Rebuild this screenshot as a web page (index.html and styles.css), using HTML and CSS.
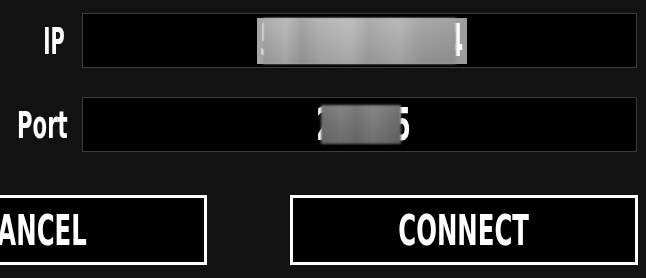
FILE: index.html
```html
<!DOCTYPE html>
<html lang="en">
<head>
  <meta charset="UTF-8" />
  <meta name="viewport" content="width=device-width, initial-scale=1" />
  <title>Connect</title>
  <link rel="stylesheet" href="styles.css">
</head>
<body>
<div class="dialog">
  <div class="field">
    <label class="field-label label-short"><span>IP</span></label>
    <div class="field-box">
      <span class="value value-ip">
        <span class="digit">5</span><span class="mask mask-ip"></span><span class="digit digit-end">4</span>
      </span>
    </div>
  </div>

  <div class="field">
    <label class="field-label"><span>Port</span></label>
    <div class="field-box">
      <span class="value value-port">
        <span class="digit">2</span><span class="mask mask-port"></span><span class="digit digit-end">5</span>
      </span>
    </div>
  </div>

  <div class="actions">
    <button class="btn"><span>CANCEL</span></button>
    <button class="btn"><span>CONNECT</span></button>
  </div>
</div>
</body>
</html>
```

FILE: styles.css
```css
html, body {
  margin: 0;
  padding: 0;
  background: #121212;
  color: #fff;
  overflow: hidden;
}
.dialog {
  padding-top: 13px;
  width: 638px;
  font-family: "DejaVu Sans Condensed", "Liberation Sans Narrow", sans-serif;
  font-weight: bold;
}
.field {
  display: grid;
  grid-template-columns: 82px 555px;
  height: 55px;
  margin-bottom: 29px;
}
.field-label {
  align-self: center;
  display: flex;
  justify-content: flex-end;
  padding-right: 14px;
  font-size: 38px;
  line-height: 1;
}
.field-label span {
  flex-shrink: 0;
  display: inline-block;
  transform: scaleX(0.62);
  transform-origin: right center;
}
.label-short {
  padding-right: 17px;
}
.label-short span {
  transform: scaleX(0.57);
}
.field-box {
  background: #000;
  border: 1.5px solid #3d3d3d;
  display: flex;
  align-items: center;
  justify-content: center;
}
.value {
  display: inline-flex;
  align-items: center;
  font-size: 44px;
  line-height: 1;
}
.digit {
  display: inline-block;
  width: 16px;
  text-align: center;
  transform: scaleX(0.6);
  position: relative;
}
.mask {
  display: inline-block;
  position: relative;
  z-index: 1;
  filter: blur(0.8px);
}
.value-ip {
  height: 46px;
  margin-left: 5px;
  padding-right: 9px;
  background: linear-gradient(to right, #a6a6a6, #9c9c9c);
}
.value-ip .digit {
  width: 14px;
}
.mask-ip {
  width: 193px;
  height: 46px;
  margin-left: -8px;
  background:
    linear-gradient(to bottom, rgba(255,255,255,0.05), rgba(0,0,0,0.12)),
    linear-gradient(to right, #a8a8a8, #b8b8b8 12%, #a2a2a2 20%, #b3b3b3 30%, #bcbcbc 45%, #a9a9a9 55%, #b6b6b6 70%, #a4a4a4 82%, #9e9e9e);
}
.value-ip .digit-end {
  margin-left: -12px;
}
.mask-port {
  width: 80px;
  height: 39px;
  margin-left: -8px;
  background:
    linear-gradient(to bottom, rgba(255,255,255,0.04), rgba(0,0,0,0.15)),
    linear-gradient(to right, #707070, #7e7e7e 25%, #747474 45%, #828282 65%, #767676 85%, #6c6c6c);
}
.value-port .digit-end {
  margin-left: -10px;
}
.actions {
  display: flex;
  gap: 83px;
  margin-left: -141px;
  margin-top: 43px;
}
.btn {
  flex: 0 0 348px;
  height: 70px;
  background: #000;
  border: 3px solid #fff;
  color: #fff;
  font-family: inherit;
  font-weight: bold;
  font-size: 43px;
  padding: 0;
  display: flex;
  align-items: center;
  justify-content: center;
}
.btn span {
  display: inline-block;
  transform: scaleX(0.63);
}
```
